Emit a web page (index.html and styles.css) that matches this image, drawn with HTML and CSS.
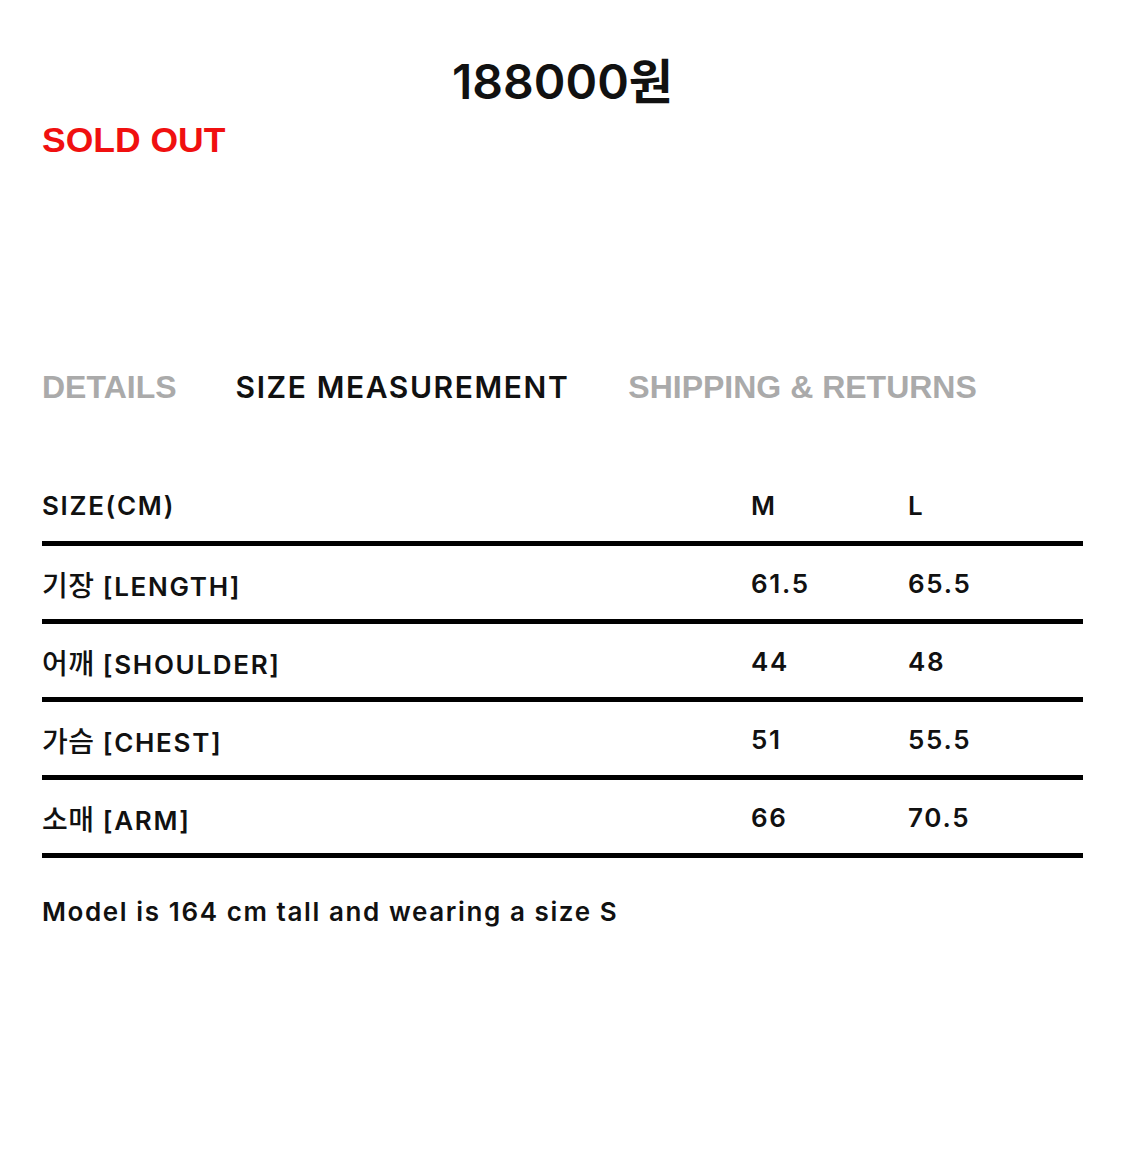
FILE: index.html
```html
<!DOCTYPE html>
<html lang="ko">
<head>
<meta charset="utf-8">
<title>Product</title>
<link rel="stylesheet" href="styles.css">
</head>
<body>
<div class="page">
  <div class="price">188000원</div>
  <div class="soldout">SOLD OUT</div>
  <nav class="tabs">
    <span class="tab">DETAILS</span>
    <span class="tab active">SIZE MEASUREMENT</span>
    <span class="tab">SHIPPING &amp; RETURNS</span>
  </nav>
  <div class="size-table">
    <div class="row head">
      <div class="cell">SIZE(CM)</div>
      <div class="cell">M</div>
      <div class="cell">L</div>
    </div>
    <div class="row">
      <div class="cell"><span class="ko">기장</span> [LENGTH]</div>
      <div class="cell">61.5</div>
      <div class="cell">65.5</div>
    </div>
    <div class="row">
      <div class="cell"><span class="ko">어깨</span> [SHOULDER]</div>
      <div class="cell">44</div>
      <div class="cell">48</div>
    </div>
    <div class="row">
      <div class="cell"><span class="ko">가슴</span> [CHEST]</div>
      <div class="cell">51</div>
      <div class="cell">55.5</div>
    </div>
    <div class="row">
      <div class="cell"><span class="ko">소매</span> [ARM]</div>
      <div class="cell">66</div>
      <div class="cell">70.5</div>
    </div>
  </div>
  <p class="model-note">Model is 164 cm tall and wearing a size S</p>
</div>
</body>
</html>
```

FILE: styles.css
```css
html, body {
  margin: 0;
  padding: 0;
  background: #fff;
}

body {
  font-family: Inter, "Noto Sans CJK KR", sans-serif;
  color: #111;
}

.page {
  padding: 0 42px;
}

.price {
  padding-top: 52px;
  font-size: 48px;
  line-height: 60px;
  font-weight: 600;
  text-align: center;
  color: #111;
}

.soldout {
  margin-top: 8px;
  font-family: "Liberation Sans", Arial, sans-serif;
  font-weight: 700;
  font-size: 35.5px;
  line-height: 40px;
  color: #f01010;
}

.tabs {
  margin-top: 207px;
  display: flex;
  gap: 59px;
  align-items: baseline;
}

.tab {
  font-family: "Liberation Sans", Arial, sans-serif;
  font-weight: 700;
  font-size: 32px;
  line-height: 40px;
  color: #aaaaaa;
}

.tab.active {
  font-family: Inter, "Noto Sans CJK KR", sans-serif;
  font-weight: 600;
  font-size: 30px;
  letter-spacing: 1.6px;
  color: #111;
}

.size-table {
  margin-top: 61px;
}

.row {
  display: grid;
  grid-template-columns: 709px 157px 1fr;
  align-items: center;
  height: 73px;
  border-bottom: 5px solid #000;
  font-size: 26px;
  font-weight: 600;
  letter-spacing: 1.7px;
}

.row .cell {
  padding-top: 2px;
}

.ko {
  font-size: 28px;
  font-weight: 500;
  letter-spacing: 0.5px;
}

.model-note {
  margin: 36px 0 0;
  font-size: 26px;
  line-height: 36px;
  font-weight: 600;
  letter-spacing: 1.6px;
}
```
